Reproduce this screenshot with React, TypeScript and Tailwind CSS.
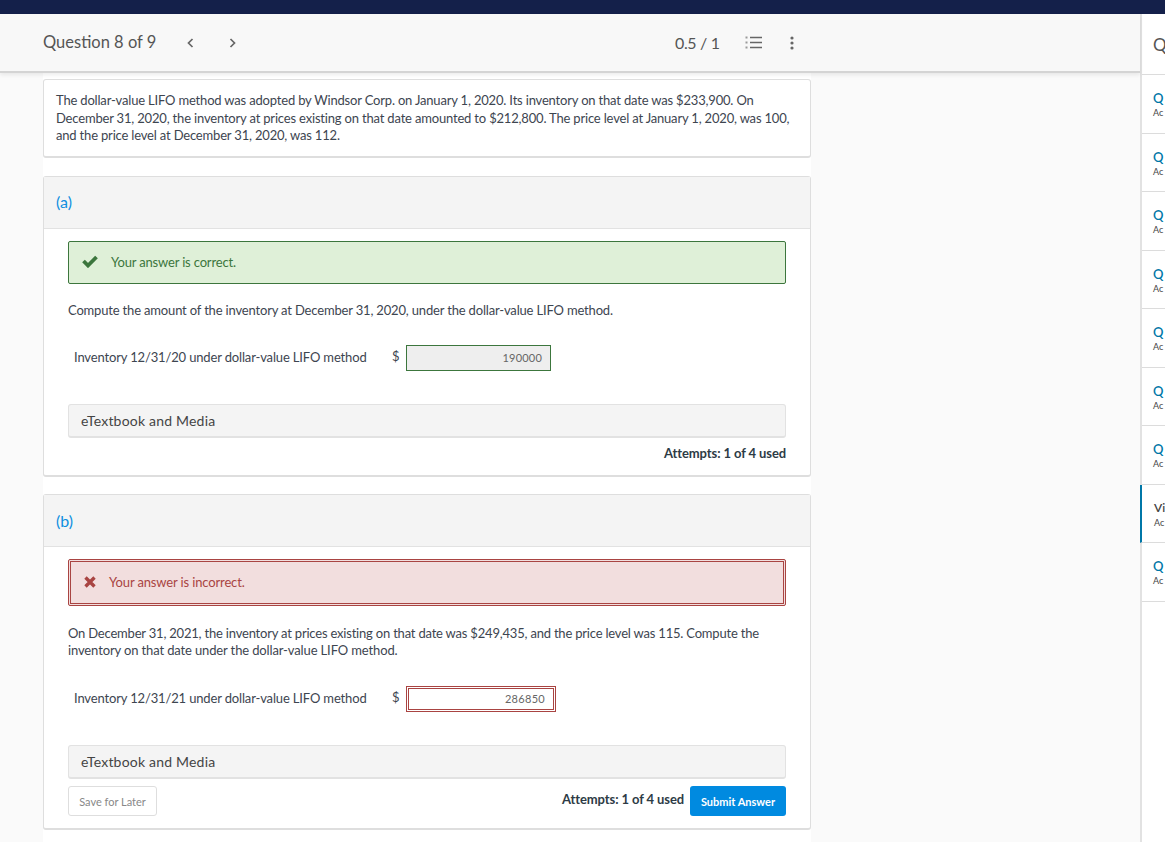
import React from "react";

function Check() {
  return (
    <svg width="16" height="13" viewBox="0 0 16 13" className="shrink-0 relative -top-px">
      <path d="M1.5 6 L6 10.5 L14.5 2" fill="none" stroke="#3c763d" strokeWidth="3.8" />
    </svg>
  );
}

function Cross() {
  return (
    <svg width="12" height="12" viewBox="0 0 12 12" className="shrink-0 relative -top-px">
      <path d="M1.5 1.5 L10.5 10.5 M10.5 1.5 L1.5 10.5" fill="none" stroke="#a94442" strokeWidth="3.4" />
    </svg>
  );
}

function ListIcon() {
  return (
    <svg width="17" height="13" viewBox="0 0 17 13">
      <path d="M5 1.5H17M5 6.5H17M5 11.5H17" stroke="#666" strokeWidth="1.3" />
      <path d="M0.5 0.5H2.5V2.5H0.5ZM0.5 5.5H2.5V7.5H0.5ZM0.5 10.5H2.5V12.5H0.5Z" fill="#999" />
    </svg>
  );
}

function Dots() {
  return (
    <svg width="4" height="14" viewBox="0 0 4 14">
      <circle cx="2" cy="2" r="1.6" fill="#666" />
      <circle cx="2" cy="7" r="1.6" fill="#666" />
      <circle cx="2" cy="12" r="1.6" fill="#666" />
    </svg>
  );
}

function Chevron({ flip }: { flip?: boolean }) {
  return (
    <svg width="7" height="10" viewBox="0 0 7 10" className={flip ? "rotate-180" : ""}>
      <path d="M5.5 1 L1.5 5 L5.5 9" fill="none" stroke="#666" strokeWidth="1.7" />
    </svg>
  );
}

function Media() {
  return (
    <div className="h-[34px] flex items-center pl-[12px] bg-[#f4f4f4] border border-[#e2e2e2] border-b-2 rounded-[3px] text-[14px] tracking-[0.2px] text-[#444]">
      eTextbook and Media
    </div>
  );
}

const rows = ["Q", "Q", "Q", "Q", "Q", "Q", "Q", "Vi", "Q"];

export default function App() {
  return (
    <div className="w-[1165px] h-[842px] overflow-hidden flex flex-col bg-[#fafafa] font-['Lato','Open_Sans',sans-serif] text-[#3d4550]">
      <div className="h-[14px] shrink-0 bg-[#14204a]" />
      <div className="flex flex-1 min-h-0">
        <main className="w-[1140px] shrink-0 flex flex-col">
          <header className="h-[59px] shrink-0 bg-[#f8f8f8] border-b-2 border-[#d4d4d4] shadow-[0_2px_4px_rgba(0,0,0,0.08)] flex items-center pl-[43px] text-[#555] relative z-10">
            <span className="text-[16.5px] w-[144px]">Question 8 of 9</span>
            <Chevron />
            <span className="w-[35px]" />
            <Chevron flip />
            <span className="ml-[439px] text-[16px] tracking-[-0.35px] w-[70px]">0.5 / 1</span>
            <ListIcon />
            <span className="w-[28px]" />
            <Dots />
          </header>

          <div className="w-[768px] flex-1 ml-[43px] pt-[6px] bg-white flex flex-col">
            <section className="h-[79px] shrink-0 bg-white border border-[#dedede] border-b-2 rounded-[3px] pl-[12px] pt-[12px] text-[13px] leading-[17.5px] tracking-[-0.18px] whitespace-nowrap">
              The dollar-value LIFO method was adopted by Windsor Corp. on January 1, 2020. Its inventory on that date was $233,900. On<br />
              December 31, 2020, the inventory at prices existing on that date amounted to $212,800. The price level at January 1, 2020, was 100,<br />
              and the price level at December 31, 2020, was 112.
            </section>

            <section className="mt-[18px] h-[301px] shrink-0 bg-white border border-[#dedede] border-b-2 rounded-[3px] flex flex-col">
              <div className="h-[52px] shrink-0 bg-[#f4f4f4] border-b border-[#e2e2e2] flex items-center pl-[12px] pb-[2px] text-[16px] text-[#0f8fe0]">(a)</div>
              <div className="px-[24px] pt-[12px] flex flex-col">
                <div className="h-[43px] bg-[#dff0d8] border border-[#3c763d] rounded-[2px] flex items-center pl-[13px] gap-[13px] text-[13px] text-[#3c763d] tracking-[-0.17px]">
                  <Check />
                  Your answer is correct.
                </div>
                <p className="mt-[18px] text-[13px] leading-[17px] tracking-[-0.17px]">Compute the amount of the inventory at December 31, 2020, under the dollar-value LIFO method.</p>
                <div className="mt-[26px] flex items-center h-[26px] pl-[6px] text-[13px] tracking-[-0.15px]">
                  <span className="w-[318px]">Inventory 12/31/20 under dollar-value LIFO method</span>
                  <span className="w-[14px] relative bottom-px">$</span>
                  <span className="w-[145px] h-[26px] bg-[#eeeeee] border border-[#3c763d] text-[11px] text-[#666] flex items-center justify-end pr-[8px] tracking-[0.2px]">190000</span>
                </div>
                <div className="mt-[33px]"><Media /></div>
                <div className="mt-[6px] text-right text-[13px] font-bold text-[#2d3b45] tracking-[-0.1px]">Attempts: 1 of 4 used</div>
              </div>
            </section>

            <section className="mt-[17px] h-[336px] shrink-0 bg-white border border-[#dedede] border-b-2 rounded-[3px] flex flex-col">
              <div className="h-[52px] shrink-0 bg-[#f4f4f4] border-b border-[#e2e2e2] flex items-center pl-[12px] text-[16px] text-[#0f8fe0]">(b)</div>
              <div className="px-[24px] pt-[12px] flex flex-col">
                <div className="h-[47px] bg-[#f2dede] border-[3px] border-double border-[#a94442] rounded-[2px] flex items-center pl-[13px] gap-[13px] text-[13px] text-[#a94442] tracking-[-0.14px]">
                  <Cross />
                  Your answer is incorrect.
                </div>
                <p className="mt-[19px] text-[13px] leading-[17px] tracking-[-0.2px]">On December 31, 2021, the inventory at prices existing on that date was $249,435, and the price level was 115. Compute the<br /><span className="tracking-[-0.13px]">inventory on that date under the dollar-value LIFO method.</span></p>
                <div className="mt-[27px] flex items-center h-[26px] pl-[6px] text-[13px] tracking-[-0.15px]">
                  <span className="w-[318px]">Inventory 12/31/21 under dollar-value LIFO method</span>
                  <span className="w-[14px] relative bottom-px">$</span>
                  <span className="w-[150px] h-[26px] bg-white border-[3px] border-double border-[#a94442] text-[11px] text-[#666] flex items-center justify-end pr-[8px] tracking-[0.3px]">286850</span>
                </div>
                <div className="mt-[33px]"><Media /></div>
                <div className="mt-[7px] flex items-start">
                  <span className="w-[89px] h-[30px] pt-[2px] bg-white border border-[#dedede] rounded-[3px] flex items-center justify-center text-[11px] text-[#888]">Save for Later</span>
                  <span className="ml-auto mt-[4px] text-[13px] font-bold text-[#2d3b45] tracking-[-0.1px]">Attempts: 1 of 4 used</span>
                  <span className="ml-[6px] w-[96px] h-[30px] pt-[2px] bg-[#008ae0] rounded-[3px] flex items-center justify-center text-[11px] font-bold text-white">Submit Answer</span>
                </div>
              </div>
            </section>
          </div>
        </main>

        <aside className="w-[25px] shrink-0 bg-white border-l-2 border-[#e2e2e2] flex flex-col">
          <div className="h-[61px] shrink-0 border-b border-[#dcdcdc] pl-[11px] pt-[19px] text-[17px] text-[#555] leading-[24px]">Q</div>
          {rows.map((r, i) => (
            <div
              key={i}
              className={
                r === "Vi"
                  ? "h-[58.5px] shrink-0 border-b border-[#dcdcdc] border-l-2 border-l-[#0077a8] -ml-[2px] pl-[12px] pt-[15px] whitespace-nowrap"
                  : "h-[58.5px] shrink-0 border-b border-[#dcdcdc] pl-[11px] pt-[15px] whitespace-nowrap"
              }
            >
              <div className={r === "Vi" ? "text-[12px] leading-[16px] font-semibold text-[#444]" : "text-[13px] leading-[16px] font-semibold text-[#0077a8]"}>{r}</div>
              <div className="text-[9px] leading-[13px] text-[#444]">Ac</div>
            </div>
          ))}
        </aside>
      </div>
    </div>
  );
}
